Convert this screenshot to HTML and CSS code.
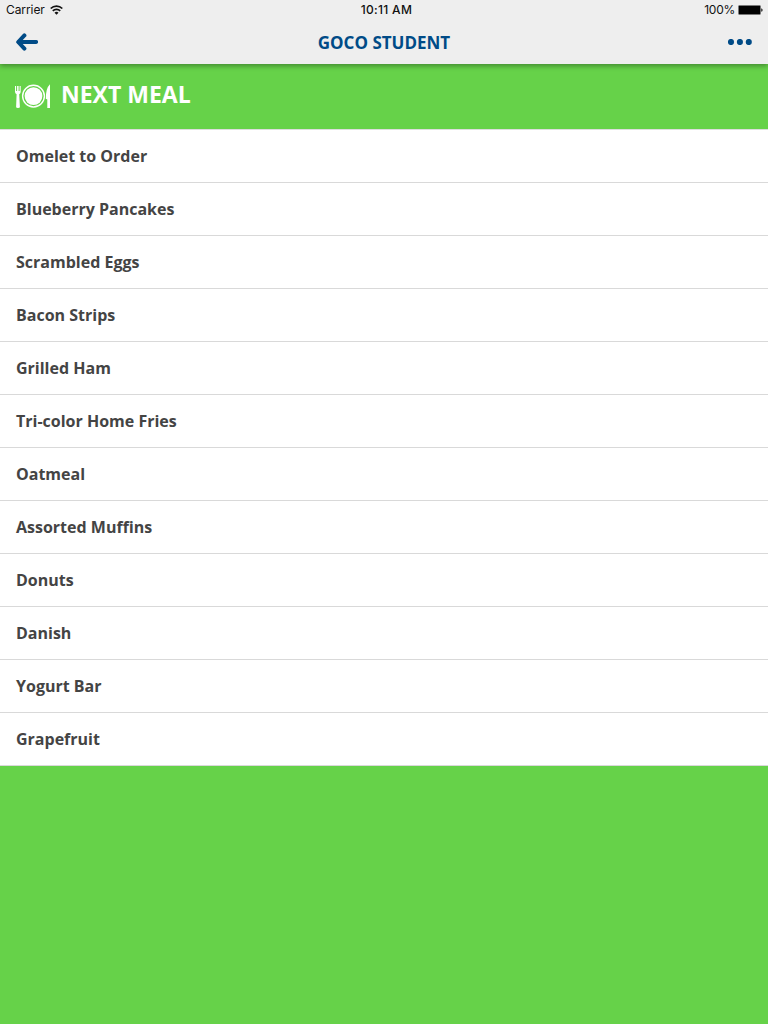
FILE: index.html
```html
<!DOCTYPE html>
<html lang="en">
<head>
<meta charset="utf-8">
<title>GOCO Student</title>
<link rel="stylesheet" href="styles.css">
</head>
<body>
<header class="topbar">
  <div class="status">
    <div class="status-left"><span class="carrier">Carrier</span>
      <svg class="wifi" width="13" height="10" viewBox="0 0 13 10"><g fill="none" stroke="#111" stroke-width="1.7"><path d="M.7 3.5a8.2 8.2 0 0 1 11.6 0"/><path d="M2.8 5.9a5.2 5.2 0 0 1 7.4 0"/></g><path d="M4.5 7.7a2.8 2.8 0 0 1 4 0l-2 2z" fill="#111"/></svg>
    </div>
    <span class="time">10:11 AM</span>
    <div class="status-right"><span class="percent">100%</span>
      <svg width="25" height="10" viewBox="0 0 25 10"><rect x=".5" y=".5" width="22" height="9" rx="1" fill="#000" stroke="#777"/><path d="M23.3 3.2c1.7.5 1.7 3.1 0 3.6z" fill="#000"/></svg>
    </div>
  </div>
  <nav class="nav">
    <svg width="22" height="18" viewBox="0 0 22 18" fill="none" stroke="#004b87" stroke-linecap="round" stroke-linejoin="round" stroke-width="4"><path d="M8.4 2.4L2.2 9l6.2 6.6"/><path d="M3 9h17.2" stroke-width="3.8"/></svg>
    <h1 class="title">GOCO STUDENT</h1>
    <svg width="24" height="6" viewBox="0 0 24 6" fill="#004b87"><circle cx="3" cy="3" r="3.1"/><circle cx="11.9" cy="3" r="3.1"/><circle cx="20.8" cy="3" r="3.1"/></svg>
  </nav>
</header>
<main>
  <div class="section-head">
    <svg class="meal-icon" width="36" height="25" viewBox="0 0 36 25" fill="#fff"><path d="M0 2h1.1v5h1V2h1.5v5h1V2h1.1v5.8q0 1.9-1.5 2.5L4.9 23q0 1-1.9 1t-1.9-1l.5-12.7Q0 9.7 0 7.8z"/><circle cx="18.5" cy="12.1" r="10.9" fill="none" stroke="#fff" stroke-width="1.4"/><circle cx="18.5" cy="12.1" r="8.9"/><path d="M35 .2V24h-2.7v-8.5l-1.5-.8q0-10.7 4.2-14.5z"/></svg>
    <h2 class="heading">NEXT MEAL</h2>
  </div>
  <ul class="meals">
    <li>Omelet to Order</li>
    <li>Blueberry Pancakes</li>
    <li>Scrambled Eggs</li>
    <li>Bacon Strips</li>
    <li>Grilled Ham</li>
    <li>Tri-color Home Fries</li>
    <li>Oatmeal</li>
    <li>Assorted Muffins</li>
    <li>Donuts</li>
    <li>Danish</li>
    <li>Yogurt Bar</li>
    <li>Grapefruit</li>
  </ul>
</main>
</body>
</html>
```
FILE: styles.css
```css
* { box-sizing: border-box; }
body {
  margin: 0;
  min-height: 100vh;
  background: #66d249;
  font-family: "Open Sans", sans-serif;
  color: #444;
}
svg { display: block; flex: none; }
.topbar {
  position: relative;
  height: 64px;
  background: #eee;
  box-shadow: 0 2px 5px rgba(0, 0, 0, .35);
}
.status {
  display: grid;
  grid-template-columns: 1fr auto 1fr;
  align-items: center;
  height: 20px;
  padding: 0 5px 0 6px;
  font-family: Inter, sans-serif;
  font-size: 12px;
  line-height: 20px;
  color: #111;
}
.status-left, .status-right { display: flex; align-items: center; gap: 5px; }
.status-right { justify-content: flex-end; gap: 3px; }
.carrier { letter-spacing: -.08px; }
.percent { letter-spacing: -.25px; }
.time { font-weight: 500; letter-spacing: .3px; padding-left: 4px; }
.nav {
  display: grid;
  grid-template-columns: 24px 1fr 24px;
  align-items: center;
  height: 44px;
  padding: 0 16px;
}
.title {
  margin: 0;
  padding-top: 2px;
  text-align: center;
  font-size: 17px;
  line-height: 42px;
  font-weight: 700;
  color: #004b87;
}
.section-head {
  display: flex;
  align-items: center;
  gap: 10px;
  height: 65px;
  padding: 0 15px 6px;
  color: #fff;
}
.meal-icon { margin-top: 5px; }
.heading { margin: 0; font-size: 23px; line-height: 32px; font-weight: 700; }
.meals {
  margin: 0;
  padding: 0;
  list-style: none;
  background: #fff;
  border-top: 1px solid #ddd;
}
.meals li {
  height: 53px;
  padding: 0 16px;
  border-bottom: 1px solid #d9d9d9;
  font-size: 16px;
  line-height: 52px;
  font-weight: 700;
}
```
